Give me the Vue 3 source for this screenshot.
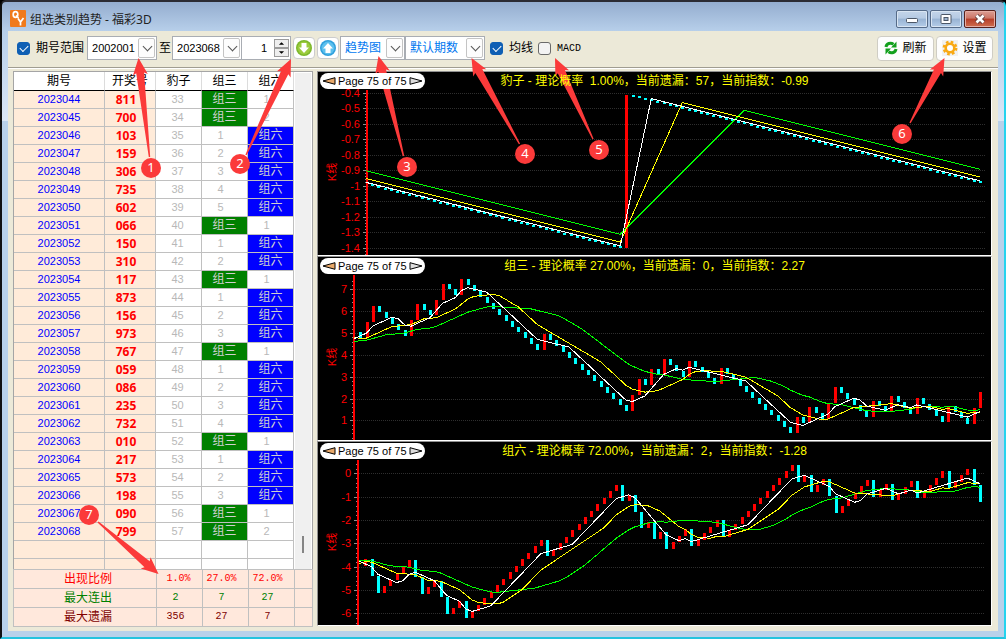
<script setup>
// Draw kinds: 3 = group three, 6 = group six, B = leopard.
const history = '3666366633666663636'
const threes = [2, 3, 9, 10, 13, 14, 17, 30, 44, 45, 47, 49, 53, 58, 70, 72, 75, 76, 82, 85, 89, 94, 98, 99]
const recent = Array(100).fill('6')
threes.forEach((i) => (recent[i] = '3'))
recent[42] = 'B'
const all = [...history.split(''), ...recent.slice(1)]
const offset = all.length - 99

function buildChart(cfg) {
  const n = all.length
  const close = Array(n + 1)
  close[n] = cfg.last
  for (let i = n; i > 0; i--) {
    close[i - 1] = close[i] - (all[i - 1] === cfg.key ? 1 - cfg.p : -cfg.p)
  }
  const step = (662 - cfg.x0) / 99
  const y = (v) => cfg.yBase - v * cfg.unit
  const x = (i) => cfg.x0 + i * step
  const candles = []
  for (let i = 1; i < 100; i++) {
    const c = close[i + offset]
    const o = close[i + offset - 1]
    const top = Math.round(y(Math.max(c, o))) - 1
    const bottom = Math.round(y(Math.min(c, o))) - 1
    candles.push({ x: Math.round(x(i)) - 1, y: top, h: Math.max(2, bottom - top), up: c > o })
  }
  const average = (period) => {
    const pts = []
    for (let i = 0; i < 100; i++) {
      let sum = 0
      let count = 0
      for (let k = i + offset; k > i + offset - period && k >= 0; k--) {
        sum += close[k]
        count++
      }
      pts.push(`${x(i).toFixed(1)},${y(sum / count).toFixed(1)}`)
    }
    return pts.join(' ')
  }
  const majors = cfg.labels.map((t) => ({ t, y: Math.round(y(Number(t))) }))
  const minors = []
  const minorStep = (cfg.gap * cfg.unit) / 5
  const first = y(Number(cfg.labels[0]))
  for (let k = -8; k < 70; k++) {
    const my = Math.round(first + k * minorStep)
    if (my > 19 && my < 183) minors.push(my)
  }
  return { ...cfg, candles, majors, minors, white: average(5), yellow: average(10), green: average(20) }
}

const charts = [
  buildChart({
    key: 'B', p: 0.01, last: -0.99, x0: 48, axis: 48, yBase: -41.5, unit: 155, gap: 0.1,
    labels: ['-0.4', '-0.5', '-0.6', '-0.7', '-0.8', '-0.9', '-1', '-1.1', '-1.2', '-1.3', '-1.4'],
    title: '豹子 - 理论概率\u00a0 1.00%，当前遗漏：57，当前指数：-0.99',
  }),
  buildChart({
    key: '3', p: 0.27, last: 2.27, x0: 36, axis: 35, yBase: 185.2, unit: 21.83, gap: 1,
    labels: ['7', '6', '5', '4', '3', '2', '1'],
    title: '组三 - 理论概率 27.00%，当前遗漏：0，当前指数：2.27',
  }),
  buildChart({
    key: '6', p: 0.72, last: -1.28, x0: 41, axis: 39, yBase: 31.4, unit: 23.33, gap: 1,
    labels: ['0', '-1', '-2', '-3', '-4', '-5', '-6'],
    title: '组六 - 理论概率 72.00%，当前遗漏：2，当前指数：-1.28',
  }),
]

const numbers = ['811', '700', '103', '159', '306', '735', '602', '066', '150', '310', '117', '873', '156', '973', '767', '059', '086', '235', '732', '010', '217', '573', '198', '090', '799']
let missThree = 0
let missSix = 0
const rows = numbers.map((num, i) => {
  const kind = new Set(num).size === 2 ? '3' : '6'
  missThree = kind === '3' ? 0 : missThree + 1
  missSix = kind === '6' ? 0 : missSix + 1
  return { id: 2023044 + i, num, leopard: 33 + i, three: missThree || '组三', six: missSix || '组六' }
})
const totals = [
  { name: '出现比例', cls: 'ratio', cells: ['\u00a01.0%', '27.0%', '72.0%'] },
  { name: '最大连出', cls: 'streak', cells: ['2', '7', '27'] },
  { name: '最大遗漏', cls: 'miss', cells: ['356', '27', '7'] },
]

const marks = [
  { n: 1, c: [151, 168], tail: [149.5, 157], tip: [138.5, 58] },
  { n: 2, c: [240, 164], tail: [246, 155], tip: [291, 59] },
  { n: 3, c: [407, 167], tail: [403.5, 156], tip: [378.5, 56] },
  { n: 4, c: [525, 154], tail: [519.5, 144], tip: [471.5, 58] },
  { n: 5, c: [599, 150], tail: [593, 139], tip: [555, 58] },
  { n: 6, c: [902, 134], tail: [910, 123], tip: [944.5, 58] },
  { n: 7, c: [89, 515], tail: [98, 522], tip: [158.5, 574] },
]
function arrow({ tail, tip }) {
  const dx = tip[0] - tail[0]
  const dy = tip[1] - tail[1]
  const len = Math.hypot(dx, dy)
  const u = [dx / len, dy / len]
  const at = (d, w) => `${(tip[0] - u[0] * d - u[1] * w).toFixed(1)},${(tip[1] - u[1] * d + u[0] * w).toFixed(1)}`
  return [at(0, 0), at(17, 7.5), at(15, 4), at(len, 0.7), at(len, -0.7), at(15, -4), at(17, -7.5)].join(' ')
}
</script>

<template>
  <div class="window">
    <header class="titlebar">
      <svg class="logo" viewBox="0 0 16 17" aria-hidden="true">
        <rect width="16" height="17" rx="1" fill="#f07a1c" />
        <ellipse cx="5.500" cy="4.500" rx="2.300" ry="2.900" fill="none" stroke="#fff" stroke-width="1.700" />
        <path d="M6 5.500l2.500 2.500M8 8.500l2.500 3.500 3-4M10.500 12v3.500" fill="none" stroke="#fff" stroke-width="1.700" />
      </svg>
      <h1>组选类别趋势 - 福彩3D</h1>
      <div class="winbtns">
        <button type="button" aria-label="最小化"><svg viewBox="0 0 30 16"><rect x="9.500" y="7.500" width="11" height="4" rx="1" fill="#fff" stroke="#4c5767" /></svg></button>
        <button type="button" aria-label="最大化"><svg viewBox="0 0 30 16"><rect x="10" y="3.500" width="10" height="9" rx="1" fill="#fff" stroke="#4c5767" /><rect x="13" y="6.500" width="4" height="3" fill="#9db4cf" stroke="#4c5767" /></svg></button>
        <button type="button" class="close" aria-label="关闭"><svg viewBox="0 0 30 16"><path d="M11.500 4.500l7 7M18.500 4.500l-7 7" stroke="#5b3a3a" stroke-width="4.500" /><path d="M11.500 4.500l7 7M18.500 4.500l-7 7" stroke="#fff" stroke-width="2.700" /></svg></button>
      </div>
    </header>

    <main class="client">
      <form class="toolbar" @submit.prevent>
        <label class="check range"><input type="checkbox" checked />期号范围</label>
        <div class="combo num"><select aria-label="起始期号"><option>2002001</option></select><span class="drop"></span></div>
        <span class="to">至</span>
        <div class="combo num"><select aria-label="结束期号"><option>2023068</option></select><span class="drop"></span></div>
        <div class="spin">
          <input type="text" value="1" aria-label="步长" />
          <div class="spinbtns">
            <button type="button" aria-label="增加"><svg viewBox="0 0 14 8"><path d="M4 5.500h6L7 2.500z" /></svg></button>
            <button type="button" aria-label="减少"><svg viewBox="0 0 14 8"><path d="M4 2.500h6L7 5.500z" /></svg></button>
          </div>
        </div>
        <button type="button" class="round" aria-label="向下">
          <svg viewBox="0 0 16 16"><circle cx="8" cy="8" r="8" fill="#7db82c" /><circle cx="8" cy="8" r="6.500" fill="#9ccb3d" /><path d="M5.500 3h5v4.500H13l-5 5.500-5-5.500h2.500z" fill="#fff" /></svg>
        </button>
        <button type="button" class="round" aria-label="向上">
          <svg viewBox="0 0 16 16"><circle cx="8" cy="8" r="8" fill="#2f9fdc" /><circle cx="8" cy="8" r="6.500" fill="#5cc0ee" /><path d="M5.500 13h5V8.500H13L8 3 3 8.500h2.500z" fill="#fff" /></svg>
        </button>
        <div class="combo view"><select aria-label="视图"><option>趋势图</option></select><span class="drop"></span></div>
        <div class="combo period"><select aria-label="期数"><option>默认期数</option></select><span class="drop"></span></div>
        <label class="check"><input type="checkbox" checked />均线</label>
        <label class="check mono"><input type="checkbox" />MACD</label>
        <div class="actions">
          <button type="button">
            <svg viewBox="0 0 14 16"><g fill="none" stroke="#12a01c" stroke-width="3"><path d="M2 7c.5-3.500 4.500-4.800 7.500-2.800M12 9c-.5 3.500-4.500 4.800-7.500 2.800" /></g><path d="M12.500 1.500v6H7zM1.500 14.500v-6H7z" fill="#12a01c" /></svg>刷新
          </button>
          <button type="button">
            <svg class="gear" viewBox="0 0 16 16"><rect width="16" height="16" fill="#f1f1f1" /><circle cx="8" cy="8" r="6.200" fill="none" stroke="#f9a913" stroke-width="2.400" stroke-dasharray="2.600 2.270" /><circle cx="8" cy="8" r="4.300" fill="#fff" stroke="#f9a913" stroke-width="2.600" /></svg>设置
          </button>
        </div>
      </form>

      <div class="body">
        <section class="side">
          <div class="listwrap">
            <table class="list">
              <colgroup><col class="c1" /><col class="c2" /><col class="c3" /><col class="c3" /><col class="c3" /></colgroup>
              <thead><tr><th>期号</th><th>开奖号</th><th>豹子</th><th>组三</th><th>组六</th></tr></thead>
              <tbody>
                <tr v-for="r in rows" :key="r.id">
                  <td class="id">{{ r.id }}</td>
                  <td class="win">{{ r.num }}</td>
                  <td class="leopard">{{ r.leopard }}</td>
                  <td :class="r.three === '组三' ? 'three' : 'count'">{{ r.three }}</td>
                  <td :class="r.six === '组六' ? 'six' : 'count'">{{ r.six }}</td>
                </tr>
                <tr><td class="id"></td><td class="win"></td><td></td><td></td><td></td></tr>
                <tr class="cut"><td class="id"></td><td class="win"></td><td></td><td></td><td></td></tr>
              </tbody>
            </table>
            <div class="scroll"><i></i></div>
          </div>
          <table class="totals">
            <colgroup><col class="t1" /><col class="c3" /><col class="c3" /><col class="c3" /><col /></colgroup>
            <tbody>
              <tr v-for="t in totals" :key="t.name" :class="t.cls">
                <th scope="row">{{ t.name }}</th>
                <td v-for="c in t.cells" :key="c">{{ c }}</td>
                <td></td>
              </tr>
            </tbody>
          </table>
        </section>

        <section class="charts">
          <article v-for="c in charts" :key="c.key" class="chart">
            <div class="head">
              <div class="pager">
                <button type="button" aria-label="上一页"><svg viewBox="0 0 14 8"><path d="M1 4L13 .7v6.600z" fill="#e8a869" stroke="#000" /></svg></button>
                <span>Page 75 of 75</span>
                <button type="button" aria-label="下一页"><svg viewBox="0 0 14 8"><path d="M13 4L1 .7v6.600z" fill="#ddd" stroke="#000" /></svg></button>
              </div>
              <h2>{{ c.title }}</h2>
            </div>
            <svg class="plot" viewBox="0 0 673 183">
              <g shape-rendering="crispEdges">
                <line v-for="m in c.majors" :key="'g' + m.t" :x1="c.axis + 2" x2="667" :y1="m.y + 0.5" :y2="m.y + 0.5" class="grid" />
                <rect v-for="m in c.minors" :key="'m' + m" :x="c.axis - 1" :y="m" width="1" height="1" class="tick" />
                <rect v-for="m in c.majors" :key="'t' + m.t" :x="c.axis - 3" :y="m.y" width="3" height="1" class="tick" />
                <rect v-for="k in c.candles" :key="k.x" :x="k.x" :y="k.y" width="3" :height="k.h" :class="k.up ? 'up' : 'down'" />
                <rect :x="c.axis" y="18" width="2" height="165" class="up" />
                <polyline :points="c.green" stroke="#0f0" />
                <polyline :points="c.yellow" stroke="#ff0" />
                <polyline :points="c.white" stroke="#fff" />
              </g>
              <text v-for="m in c.majors" :key="'l' + m.t" :x="c.axis - 6" :y="m.y + 4" text-anchor="end" class="lab">{{ m.t }}</text>
              <text transform="translate(18 100) rotate(-90)" text-anchor="middle" class="lab">K线</text>
            </svg>
          </article>
        </section>
      </div>
    </main>

    <svg class="marks" viewBox="0 0 1006 639">
      <g v-for="m in marks" :key="m.n">
        <polygon :points="arrow(m)" fill="#fb3a3a" />
        <circle :cx="m.c[0]" :cy="m.c[1]" r="10" fill="#fb3a3a" />
        <text :x="m.c[0]" :y="m.c[1] + 4" text-anchor="middle">{{ m.n }}</text>
      </g>
    </svg>
  </div>
</template>

<style>
body { margin: 0; background: #000; }
</style>

<style scoped>
* { box-sizing: border-box; }
.window {
  position: relative;
  display: flex;
  flex-direction: column;
  min-height: 100vh;
  padding: 0 6px 6px 6px;
  border: 2px solid #2b2b33;
  border-right-color: #25d3ee;
  border-bottom-color: #25c3de;
  border-left-color: #111;
  border-radius: 6px 6px 0 0;
  background: linear-gradient(#94adcf 0, #b7cfea 29px, #dbe7f6 119px, #b9d1ea 119px);
  font: 12px/16px "Liberation Sans", "Noto Sans CJK SC", sans-serif;
  color: #000;
}
button, input, select { font: inherit; color: inherit; margin: 0; padding: 0; }
.titlebar { display: flex; align-items: flex-start; height: 29px; padding: 8px 2px 0 2px; }
.logo { width: 16px; height: 17px; }
h1 { margin: 1px 0 0 4px; font: 400 12px/17px "Noto Sans", "Noto Sans CJK SC", sans-serif; color: #222; flex: 1; }
.winbtns { display: flex; gap: 2px; }
.winbtns button {
  width: 32px; height: 18px; border: 1px solid #566b88; border-radius: 2px;
  background: linear-gradient(#c4d5e9 0, #b5cae3 45%, #98b3d3 50%, #b5cde8);
  box-shadow: inset 0 0 0 1px #d9e5f2;
}
.winbtns .close { border-color: #56201c; background: linear-gradient(#dc9e94 0, #cc7566 45%, #b63d28 50%, #cf6f50); box-shadow: inset 0 0 0 1px #e5aea4; }
.winbtns svg { display: block; width: 30px; height: 16px; }
.client { flex: 1; display: flex; flex-direction: column; background: #ece9d8; }
.toolbar { display: flex; align-items: center; height: 37px; padding: 0 5px 2px 9px; border-bottom: 1px solid #a09d91; box-shadow: 0 1px 0 #fff; }
.check { display: flex; align-items: center; gap: 6px; margin-left: 5px; }
.check.range { margin: 0 3px 0 0; }
.check.mono { font: 10px "Liberation Mono", monospace; }
.check input { appearance: none; position: relative; width: 13px; height: 13px; border: 1px solid #6a6a6a; border-radius: 3px; background: #f3f3f3; }
.check input:checked { background: #0f5fb4; border-color: #0f5fb4; }
.check input:checked::after { content: ""; position: absolute; left: 2px; top: 2px; width: 7px; height: 4px; border: solid #fff; border-width: 0 0 1px 1px; transform: rotate(-45deg); }
.combo { position: relative; height: 24px; border: 1px solid #a9adb3; background: #fff; }
.combo select { appearance: none; width: 100%; height: 100%; border: 0; padding: 0 4px; background: none; outline: 0; }
.num { width: 70px; }
.num select { font-size: 11px; }
.view { width: 65px; margin-left: 1px; color: #0078f0; }
.period { width: 80px; color: #0078f0; }
.drop { position: absolute; right: 1px; top: 1px; width: 17px; height: 20px; border: 1px solid #c4c4c4; border-radius: 2px; background: #fdfdfd; pointer-events: none; }
.drop::after { content: ""; position: absolute; left: 5px; top: 4px; width: 6px; height: 6px; border: solid #555; border-width: 0 1px 1px 0; transform: rotate(45deg); }
.to { margin: 0 1px 0 2px; }
.spin { display: flex; width: 49px; height: 24px; border: 1px solid #a9adb3; border-left: 0; background: #fff; padding: 2px 1px; }
.spin input { width: 31px; border: 0; padding-right: 7px; text-align: right; background: none; font-size: 11px; }
.spinbtns { display: flex; flex-direction: column; }
.spinbtns button { width: 15px; height: 9px; border: 1px solid #9b9b9b; background: #eee; }
.spinbtns svg { display: block; width: 13px; height: 7px; }
.round { width: 22px; height: 22px; margin-left: 2px; border: 1px solid #ccc; border-radius: 4px; background: #fff; display: grid; place-items: center; }
.round svg { width: 16px; height: 16px; }
.actions { margin-left: auto; display: flex; gap: 2px; }
.actions button { display: flex; align-items: center; justify-content: center; gap: 4px; width: 57px; height: 25px; border: 1px solid #cfcdc4; border-radius: 4px; background: #fdfdfd; }
.actions svg { width: 14px; height: 16px; }
.actions .gear { width: 16px; }
.body { flex: 1; display: flex; gap: 4px; padding: 3px 6px 4px 5px; }
.side { width: 300px; display: flex; flex-direction: column; }
.listwrap { display: flex; border: 1px solid #a5a5a5; border-bottom: 0; background: #fff; height: 499px; overflow: hidden; }
table { border-collapse: separate; border-spacing: 0; table-layout: fixed; }
.list { width: 280px; }
.c1 { width: 91px; }
.c2 { width: 51px; }
.c3 { width: 46px; }
.t1 { width: 143px; }
th, td { padding: 0; font-weight: 400; text-align: center; overflow: hidden; white-space: nowrap; }
.list th { height: 19px; line-height: 18px; border-right: 1px solid #dcdcdc; border-bottom: 1px solid #000; }
.list td { height: 18px; line-height: 17px; border-right: 1px solid #c0c0c0; border-bottom: 1px solid #c0c0c0; color: #b8b8b8; font-size: 11px; }
.list .id { background: #ffebd9; color: #00f; }
.list .win { background: #ffebd9; color: #f00; font: 700 12px/17px "Noto Sans", sans-serif; padding-right: 8px; }
.list .leopard { padding-right: 2px; }
.list .count { padding-right: 8px; }
.list .three, .list .six { color: #d0d0d0; font-size: 12px; }
.list .three { background: #008000; }
.list .six { background: #00f; }
.list .cut td { height: 11px; }
.scroll { flex: 1; margin: 1px; background: #f0f0f0; display: flex; align-items: flex-end; justify-content: center; }
.scroll i { width: 2px; height: 17px; margin-bottom: 16px; background: #858585; }
.totals { width: 300px; background: #ffe8dc; border-top: 1px solid #c0c0c0; border-left: 1px solid #c0c0c0; margin-top: -1px; }
.totals th, .totals td { height: 19px; line-height: 18px; border-right: 1px solid #c0c0c0; border-bottom: 1px solid #c0c0c0; }
.totals th { padding-left: 6px; }
.totals td { font: 10px/16px "Liberation Mono", monospace; padding-right: 8px; }
.ratio { color: #f00; }
.streak { color: #008000; }
.miss { color: #800000; }
.charts { flex: 1; min-width: 0; display: flex; flex-direction: column; margin-bottom: 1px; }
.chart { flex: 1; display: grid; background: #000; border: 1px solid #909090; border-right-color: #fff; border-bottom-color: #fff; }
.head, .plot { grid-area: 1 / 1; min-width: 0; }
.plot { width: 100%; display: block; }
.head { display: grid; align-items: start; z-index: 1; height: 20px; }
.head > * { grid-area: 1 / 1; }
h2 { margin: 1px 0 0; justify-self: center; font-size: 12px; line-height: 17px; font-weight: 400; color: #ff0; }
.pager { justify-self: start; display: flex; align-items: center; gap: 2px; margin: 1px 0 0 2px; height: 16px; padding: 0 2px; border-radius: 8px; background: #fff; font-size: 11px; z-index: 1; }
.pager button { width: 14px; height: 8px; border: 0; background: none; }
.pager svg { display: block; width: 14px; height: 8px; }
.grid { stroke: #2e2e2e; stroke-dasharray: 1 1; }
.tick { fill: #909090; }
.up { fill: #f00; }
.down { fill: #0ff; }
polyline { fill: none; stroke-width: 1; }
.lab { fill: #f00; font-size: 11px; }
.marks { position: absolute; left: -2px; top: -2px; width: 1006px; height: 639px; pointer-events: none; }
.marks text { fill: #fff; font: 13px "Noto Sans", sans-serif; }
</style>
